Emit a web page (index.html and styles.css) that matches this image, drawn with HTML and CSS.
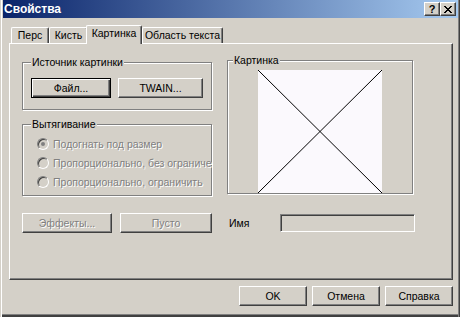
FILE: index.html
```html
<!DOCTYPE html>
<html lang="ru">
<head>
<meta charset="UTF-8">
<title>Свойства</title>
<link rel="stylesheet" href="styles.css">
</head>
<body>

<div class="window">
  <!-- Заголовок окна -->
  <div class="titlebar">
    <span class="title">Свойства</span>
    <div class="caption-buttons">
      <span class="caption-btn help">?</span>
      <span class="caption-btn close">
        <svg width="8" height="7" viewBox="0 0 8 7" shape-rendering="crispEdges">
          <path d="M0 0h2v1h1v1h2v-1h1v-1h2v1h-1v1h-1v1h-1v1h1v1h1v1h1v1h-2v-1h-1v-1h-2v1h-1v1h-2v-1h1v-1h1v-1h1v-1h-1v-1h-1v-1h-1z" fill="#000"/>
        </svg>
      </span>
    </div>
  </div>

  <div class="dialog-body">
    <!-- Вкладки -->
    <div class="tabs">
      <div class="tab tab-pers">Перс</div>
      <div class="tab tab-brush">Кисть</div>
      <div class="tab tab-picture active">Картинка</div>
      <div class="tab tab-text">Область текста</div>
    </div>

    <div class="panel">
      <div class="panel-columns">
        <div class="left-column">
          <fieldset class="group source-group">
            <legend>Источник картинки</legend>
            <div class="button-row">
              <button class="btn default-btn btn-file">Файл...</button>
              <button class="btn btn-twain">TWAIN...</button>
            </div>
          </fieldset>

          <fieldset class="group stretch-group">
            <legend>Вытягивание</legend>
            <div class="radio-row"><span class="radio checked"></span>Подогнать под размер</div>
            <div class="radio-row"><span class="radio"></span>Пропорционально, без ограниче</div>
            <div class="radio-row"><span class="radio"></span>Пропорционально, ограничить</div>
          </fieldset>
        </div>

        <fieldset class="group picture-group">
          <legend>Картинка</legend>
          <div class="picture-box">
            <svg width="124" height="123" viewBox="0 0 124 123">
              <line x1="0" y1="0" x2="124" y2="123" stroke="#000" stroke-width="1"/>
              <line x1="124" y1="0" x2="0" y2="123" stroke="#000" stroke-width="1"/>
            </svg>
          </div>
        </fieldset>
      </div>

      <div class="panel-bottom">
        <button class="btn btn-effects" disabled>Эффекты...</button>
        <button class="btn btn-empty" disabled>Пусто</button>
        <span class="name-label">Имя</span>
        <div class="name-input"></div>
      </div>
    </div>

    <!-- Кнопки диалога -->
    <div class="actions">
      <button class="btn action-btn">OK</button>
      <button class="btn action-btn">Отмена</button>
      <button class="btn action-btn">Справка</button>
    </div>
  </div>
</div>

</body>
</html>
```

FILE: styles.css
```css
body {
  margin: 0;
  background-color: #d4d0c8;
  font-family: "Liberation Sans", Arial, sans-serif;
  font-size: 10.5px;
  color: #000;
}
.window {
  width: 460px;
  height: 317px;
  box-sizing: border-box;
  padding: 0 2px 3px 3px;
  background-color: #d4d0c8;
  box-shadow: inset 1px 0 #d4d0c8, inset 2px 0 #fff, inset -1px 0 #404040, inset -2px 0 #808080, inset 0 -2px #404040, inset 0 -3px #808080;
}
.titlebar {
  display: flex;
  align-items: center;
  justify-content: space-between;
  height: 18px;
  padding: 0 2px 0 1px;
  background: linear-gradient(to right, #0a246a, #a6caf0);
}
.title {
  color: #fff;
  font-weight: bold;
  font-size: 12px;
}
.caption-buttons {
  display: flex;
}
.caption-btn {
  display: flex;
  align-items: center;
  justify-content: center;
  width: 16px;
  height: 14px;
  box-sizing: border-box;
  background-color: #d4d0c8;
  border: 1px solid;
  border-color: #fff #404040 #404040 #fff;
  box-shadow: inset -1px -1px #808080;
  font-weight: bold;
  font-size: 11px;
  line-height: 11px;
}
.dialog-body {
  padding: 7px 5px 0 6px;
}

/* вкладки */
.tabs {
  display: flex;
  align-items: flex-end;
  height: 18px;
  padding-left: 2px;
}
.tab {
  height: 16px;
  box-sizing: border-box;
  border-top: 1px solid #fff;
  border-left: 1px solid #fff;
  border-right: 1px solid #404040;
  border-radius: 2px 2px 0 0;
  box-shadow: inset -1px 0 #808080;
  line-height: 14px;
  text-align: center;
  white-space: nowrap;
  overflow: hidden;
}
.tab-pers { width: 38px; }
.tab-brush { width: 39px; }
.tab-picture { width: 56px; }
.tab-text { width: 81px; }
.tab.active {
  position: relative;
  z-index: 1;
  height: 19px;
  margin: 0 0 -1px -2px;
  background-color: #d4d0c8;
  line-height: 15px;
}

.panel {
  height: 237px;
  box-sizing: border-box;
  border: 1px solid #fff;
  border-right-color: #404040;
  border-bottom-color: #404040;
  box-shadow: inset -1px -1px #808080;
  padding: 10px 12px 0 12px;
}
.panel-columns {
  display: flex;
  align-items: flex-start;
  gap: 15px;
}
.left-column {
  display: flex;
  flex-direction: column;
  gap: 8px;
  width: 190px;
  margin-top: 2px;
}

/* рамки групп */
.group {
  margin: 0;
  min-inline-size: 0;
  border: 1px solid #808080;
  box-shadow: 1px 1px #fff, inset 1px 1px #fff;
}
.group legend {
  padding: 0 1px;
  line-height: 13px;
  background-color: #d4d0c8;
}
.source-group {
  padding: 9px 8px 11px 8px;
}
.stretch-group {
  padding: 3px 8px 4px 8px;
}
.picture-group {
  width: 186px;
  box-sizing: border-box;
  padding: 3px 5px 0 5px;
}
.button-row {
  display: flex;
  gap: 7px;
}
.picture-box {
  width: 124px;
  height: 123px;
  margin: 0 auto;
  background-color: #fbf9fd;
}
.picture-box svg {
  display: block;
}

.radio-row {
  display: flex;
  align-items: center;
  height: 19px;
  white-space: nowrap;
  color: #808080;
  text-shadow: 1px 1px #fff;
}
.radio {
  flex: none;
  position: relative;
  width: 12px;
  height: 12px;
  box-sizing: border-box;
  margin: 0 4px 0 6px;
  border: 1px solid;
  border-color: #808080 #fff #fff #808080;
  border-radius: 50%;
  background-color: #d4d0c8;
  box-shadow: inset 1px 1px #404040, inset -1px -1px #d4d0c8;
}
.radio.checked::after {
  content: "";
  position: absolute;
  left: 3px;
  top: 3px;
  width: 4px;
  height: 4px;
  border-radius: 50%;
  background-color: #808080;
}

/* кнопки */
.btn {
  height: 20px;
  box-sizing: border-box;
  padding: 0;
  font: inherit;
  color: #000;
  background-color: #d4d0c8;
  border: 1px solid;
  border-color: #fff #404040 #404040 #fff;
  box-shadow: inset -1px -1px #808080;
}
.btn.default-btn {
  border-color: #000;
  box-shadow: inset 1px 1px #fff, inset -1px -1px #404040, inset -2px -2px #808080;
}
.btn:disabled {
  color: #808080;
  text-shadow: 1px 1px #fff;
}
.btn-file { width: 80px; }
.btn-twain { width: 85px; }
.btn-effects { width: 90px; }
.btn-empty { width: 92px; margin-left: 8px; }

.panel-bottom {
  display: flex;
  align-items: center;
  margin-top: 17px;
}
.name-label {
  width: 51px;
  margin-left: 17px;
}
.name-input {
  width: 135px;
  height: 18px;
  box-sizing: border-box;
  border: 1px solid;
  border-color: #808080 #fff #fff #808080;
  box-shadow: inset 1px 1px #404040, inset -1px -1px #d4d0c8;
}

.actions {
  display: flex;
  justify-content: flex-end;
  gap: 5px;
  margin-top: 6px;
}
.action-btn {
  width: 68px;
}
```
